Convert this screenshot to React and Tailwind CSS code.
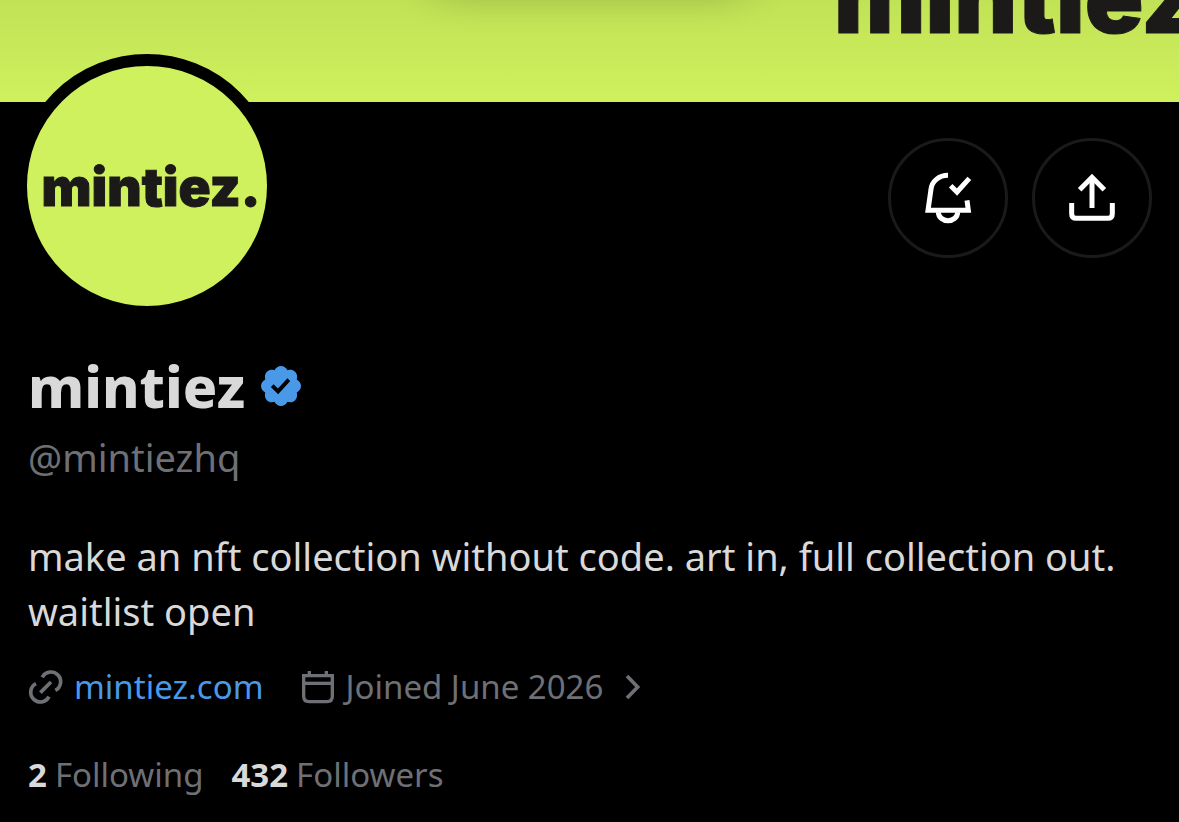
const BellCheckIcon = () => (
  <svg className="size-15" viewBox="0 0 180 180" fill="none" stroke="currentColor" strokeWidth={15} aria-hidden="true">
    <path d="M90 22C63 22 41 40 39 64L30 127H151L147 97" />
    <path d="M61 133C61 147 74 158 90 158S119 147 119 133" />
    <path d="M98 53L117 72L154 31" />
  </svg>
)

const ShareIcon = () => (
  <svg className="size-15" viewBox="0 0 180 180" fill="none" stroke="currentColor" strokeWidth={15} aria-hidden="true">
    <path d="M53 65L90 28L127 65" />
    <path d="M90 30V120" />
    <path d="M29 105V137Q29 151 43 151H137Q151 151 151 137V105" />
  </svg>
)

const VerifiedIcon = () => (
  <svg className="size-10 text-[#4a99e9]" viewBox="1.75 1.75 20.5 20.5" fill="currentColor" role="img" aria-label="Verified account">
    <path d="M22.25 12c0-1.43-.88-2.67-2.19-3.34.46-1.39.2-2.9-.81-3.91s-2.52-1.27-3.91-.81c-.66-1.31-1.91-2.19-3.34-2.19s-2.67.88-3.33 2.19c-1.4-.46-2.91-.2-3.92.81s-1.26 2.52-.8 3.91c-1.31.67-2.2 1.91-2.2 3.34s.89 2.67 2.2 3.34c-.46 1.39-.21 2.9.8 3.91s2.52 1.26 3.91.81c.67 1.31 1.91 2.19 3.34 2.19s2.68-.88 3.34-2.19c1.39.45 2.9.2 3.91-.81s1.27-2.52.81-3.91c1.31-.67 2.19-1.91 2.19-3.34zm-11.71 4.2L6.8 12.46l1.41-1.42 2.26 2.26 4.8-5.23 1.47 1.36-6.2 6.77z" />
  </svg>
)

const LinkIcon = () => (
  <svg className="size-9" viewBox="0 0 108 108" fill="none" stroke="currentColor" strokeWidth={11} aria-hidden="true">
    <path d="M43 25A29 29 0 1 1 82 64" />
    <path d="M63 83A29 29 0 1 1 24 44" />
    <path d="M37 71L69 39" />
  </svg>
)

const CalendarIcon = () => (
  <svg className="size-9" viewBox="0 0 108 108" fill="none" stroke="currentColor" strokeWidth={10} aria-hidden="true">
    <path d="M11 20H97V82Q97 98 81 98H27Q11 98 11 82Z" />
    <path d="M11 43H97" />
    <path d="M28 6V20M79 6V20" />
  </svg>
)

const ChevronIcon = () => (
  <svg className="ml-3 h-6 w-4" viewBox="0 0 48 72" fill="none" stroke="currentColor" strokeWidth={11} aria-hidden="true">
    <path d="M6 3L38 36L6 69" />
  </svg>
)

const RoundButton = ({ label, children }) => (
  <button
    type="button"
    aria-label={label}
    className="flex size-30 items-center justify-center rounded-full border-3 border-[#1a1a1a] text-white"
  >
    {children}
  </button>
)

const Stat = ({ value, label }) => (
  <a href="#" className="flex gap-2">
    <span className="font-bold text-[#d9d9d9]">{value}</span>
    <span>{label}</span>
  </a>
)

export default function App() {
  return (
    <main className="min-h-screen overflow-x-hidden bg-black font-['Noto_Sans',sans-serif] text-[#6e7076]">
      <div className="relative h-[102px] overflow-hidden bg-linear-to-b from-[#c1e256] to-[#cff15d]">
        <div className="absolute -top-14 left-1/2 h-12 w-80 -translate-x-1/2 rounded-full shadow-[0_0_40px_rgba(0,0,0,0.25)]" />
        <div className="absolute bottom-14 left-[834px] font-['Inter',sans-serif] text-[97px] leading-none font-black text-[#1c1a19] [-webkit-text-stroke:1px]">
          mintiez.
        </div>
      </div>

      <div className="flex items-start justify-between pr-[27px] pl-[15px]">
        <div className="relative -mt-12 flex size-[264px] items-center justify-center rounded-full border-12 border-black bg-[#cff15d] pt-1 pl-2 font-['Inter',sans-serif] text-[53px] font-black text-[#1c1a19] [-webkit-text-stroke:1px]">
          mintiez.
        </div>
        <div className="mt-9 flex gap-6">
          <RoundButton label="Notifications">
            <BellCheckIcon />
          </RoundButton>
          <RoundButton label="Share profile">
            <ShareIcon />
          </RoundButton>
        </div>
      </div>

      <div className="px-7 pt-9 pb-5">
        <div className="flex items-center gap-4">
          <h1 className="text-[57px] leading-16 font-extrabold text-[#d9d9d9]">mintiez</h1>
          <VerifiedIcon />
        </div>
        <p className="mt-3 text-[38px] leading-[55px]">@mintiezhq</p>

        <p className="mt-11 text-[38px] leading-[55px] text-[#d9d9d9]">
          make an nft collection without code. art in, full collection out. waitlist open
        </p>

        <div className="mt-6 flex items-center gap-9 text-[33px] leading-12">
          <a href="#" className="flex items-center gap-2.5 text-[#4a99e9]">
            <span className="text-[#6e7076]">
              <LinkIcon />
            </span>
            mintiez.com
          </a>
          <button type="button" className="flex items-center gap-2.5">
            <CalendarIcon />
            Joined June 2026
            <ChevronIcon />
          </button>
        </div>

        <div className="mt-10 flex gap-7 text-[33px] leading-12">
          <Stat value="2" label="Following" />
          <Stat value="432" label="Followers" />
        </div>
      </div>
    </main>
  )
}
